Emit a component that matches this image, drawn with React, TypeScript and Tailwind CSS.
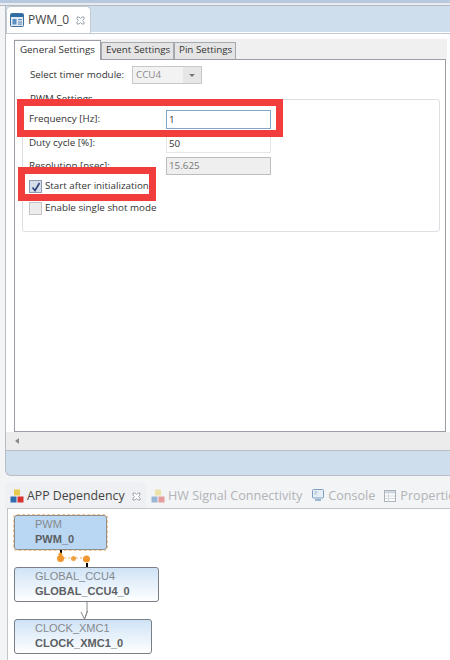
const font = { fontFamily: '"Open Sans", "Noto Sans", sans-serif' };

function CloseIcon({ className }: { className: string }) {
  return (
    <svg width="9" height="9" viewBox="0 0 9 9" className={`shrink-0 ${className}`}>
      <path d="M1 1h2l1.500 1.500L6 1h2v2L6.500 4.500 8 6v2H6L4.500 6.500 3 8H1V6l1.500-1.500L1 3z" fill="#fff" stroke="#8f9aa6" strokeWidth="0.9" />
    </svg>
  );
}

function EditorIcon() {
  return (
    <svg width="14" height="14" viewBox="0 0 14 14" className="shrink-0">
      <rect x="0.500" y="0.500" width="13" height="13" rx="1" fill="#dfeaf5" stroke="#3f6f9f" />
      <rect x="1" y="1" width="12" height="3" fill="#2f6ca6" />
      <rect x="2.500" y="6" width="4" height="5.500" fill="#5b8fc0" />
      <rect x="8" y="6" width="4" height="1.200" fill="#6d90b3" />
      <rect x="8" y="8.500" width="4" height="1.200" fill="#6d90b3" />
      <rect x="8" y="10.500" width="4" height="1.200" fill="#6d90b3" />
    </svg>
  );
}

function DependencyIcon({ faded }: { faded?: boolean }) {
  return (
    <svg width="14" height="14" viewBox="0 0 14 14" className={`shrink-0 ${faded ? 'opacity-45' : ''}`}>
      <rect x="4" y="0.500" width="6" height="6" fill="#e9c84e" />
      <rect x="0.500" y="7.500" width="6" height="6" fill="#2f6cb0" />
      <rect x="7.500" y="7.500" width="6" height="6" fill="#d8322e" />
    </svg>
  );
}

function ConsoleIcon() {
  return (
    <svg width="12" height="13" viewBox="0 0 12 13" className="shrink-0">
      <rect x="0.500" y="0.500" width="11" height="8.500" rx="1" fill="#e7eef6" stroke="#7e9fc4" />
      <path d="M2.500 3h3M2.500 5h2" stroke="#9db4cd" />
      <rect x="3" y="10" width="6" height="2" fill="#9db6d2" />
    </svg>
  );
}

function PropertiesIcon() {
  return (
    <svg width="12" height="12" viewBox="0 0 12 12" className="shrink-0">
      <rect x="0.500" y="0.500" width="11" height="11" fill="#fff" stroke="#aab2bb" />
      <rect x="1" y="1" width="10" height="2.500" fill="#cfd6de" />
      <path d="M1 6h10M1 8.500h10M4.500 3.500v8" stroke="#d2d7dd" />
    </svg>
  );
}

function Checkbox({ checked }: { checked?: boolean }) {
  return (
    <span className={`w-[13px] h-[13px] shrink-0 border flex items-center justify-center ${checked ? 'border-[#8e9bb0] bg-[#d5ddeb]' : 'border-[#c4c4c4] bg-[#ececec]'}`}>
      {checked && (
        <svg width="10" height="10" viewBox="0 0 10 10">
          <path d="M1.500 5.500 4 8.500 8.500 1" fill="none" stroke="#2f3f78" strokeWidth="1.600" />
        </svg>
      )}
    </span>
  );
}

function DiagramNode({ title, name, className }: { title: string; name: string; className: string }) {
  return (
    <div className={`absolute left-[14px] h-[35px] rounded-[3px] border pl-[20px] text-[11px] leading-[15px] pt-[1px] ${className}`} style={{ fontFamily: '"Liberation Sans", sans-serif' }}>
      <div className="text-[#85898e]">{title}</div>
      <div className="font-bold text-[#5c5f63]">{name}</div>
    </div>
  );
}

export default function App() {
  return (
    <div className="relative w-[450px] h-[660px] overflow-hidden flex flex-col bg-[#f3f4f6] text-[9.800px] text-[#333]" style={font}>
      <div className="h-[3px] bg-[#b7c9df]" />
      <div className="h-[3px] bg-[#e9ebee] border-b border-[#b4bac4]" />

      {/* editor view */}
      <div className="h-[470px] flex flex-col rounded-bl-[6px] border-l border-b border-[#b8bec7] ml-[5px] bg-[#cfdeed]">
        <div className="h-[26px] flex shrink-0">
          <div className="w-[85px] h-[27px] bg-white rounded-t-[5px] border border-b-0 border-[#c3c9d1] flex items-center pl-[3px] gap-[4px] text-[12px] text-[#444] z-10">
            <EditorIcon />
            <span>PWM_0</span>
            <CloseIcon className="ml-[3px]" />
          </div>
        </div>
        <div className="h-[2px] bg-white border-b border-[#c3c9d1]" />
        <div className="h-[5px] bg-white shrink-0" />

        <div className="h-[393px] shrink-0 bg-white pl-[8px] flex flex-col">
          {/* inner tabs */}
          <div className="h-[20px] shrink-0 flex items-end bg-[#f0f0f0] mr-[3px]">
            <div className="w-[87px] h-[20px] bg-white border border-b-0 border-[#9a9ea6] pl-[5px] pt-[2px] z-10 -mb-px whitespace-nowrap">General Settings</div>
            <div className="w-[73px] h-[17px] bg-[#e4e4e4] border border-b-0 border-[#a5a9b0] pl-[4px] whitespace-nowrap">Event Settings</div>
            <div className="w-[62px] h-[17px] bg-[#e4e4e4] border border-b-0 border-[#a5a9b0] pl-[4px] whitespace-nowrap">Pin Settings</div>
          </div>

          <div className="flex-1 border border-[#9a9ea6] mr-[4px] pl-[7px] pr-[5px] pt-[6px] bg-white flex flex-col">
            <div className="flex items-center h-[18px] pl-[8px]">
              <span className="w-[102px]">Select timer module:</span>
              <div className="w-[70px] h-[18px] border border-[#c8c8c8] bg-[#f2f2f2] flex items-center pl-[3px] text-[#8a8a8a]">
                <span className="flex-1">CCU4</span>
                <span className="w-[18px] h-full bg-[#e6e6e6] flex items-center justify-center">
                  <span className="w-0 h-0 border-x-[3px] border-x-transparent border-t-[3px] border-t-[#777]" />
                </span>
              </div>
            </div>

            <div className="mt-[9px] pl-[8px] h-[12px] leading-[12px]">PWM Settings</div>

            <div className="h-[133px] -mt-[6px] border border-[#dcdfe3] rounded-[3px] pl-[6px] pt-[10px]">
              <div className="flex items-center h-[19px]">
                <span className="w-[137px]">Frequency [Hz]:</span>
                <div className="w-[105px] h-[19px] border border-[#7fa6c9] px-[2px] leading-[17px]">1</div>
              </div>
              <div className="flex items-center h-[19px] mt-[5px]">
                <span className="w-[137px]">Duty cycle [%]:</span>
                <div className="w-[105px] h-[19px] border border-[#e3e6ea] px-[2px] leading-[17px]">50</div>
              </div>
              <div className="flex items-center h-[18px] mt-[4px]">
                <span className="w-[137px]">Resolution [nsec]:</span>
                <div className="w-[105px] h-[18px] border border-[#bdbdbd] bg-[#efefef] px-[2px] leading-[16px] text-[#777]">15.625</div>
              </div>
              <div className="flex items-center h-[13px] mt-[5px] gap-[3px]">
                <Checkbox checked />
                <span>Start after initialization</span>
              </div>
              <div className="flex items-center h-[13px] mt-[9px] gap-[3px]">
                <Checkbox />
                <span>Enable single shot mode</span>
              </div>
            </div>

            <div className="flex-1" />
          </div>
        </div>

        <div className="h-[19px] shrink-0 bg-[#ececec] border-b border-[#b9bcc0] pl-[9px] flex items-center">
          <span className="w-0 h-0 border-y-[3px] border-y-transparent border-r-[4px] border-r-[#8a8a8a]" />
        </div>
        <div className="flex-1" />
      </div>

      {/* bottom view */}
      <div className="h-[6px] shrink-0" />
      <div className="h-[26px] shrink-0 flex items-center pt-[2px] text-[12.600px] text-[#b0b3b7] whitespace-nowrap">
        <div className="w-[141px] h-[26px] -mt-[2px] ml-[5px] shrink-0 rounded-t-[6px] bg-[#eef0f3] flex items-center pt-[2px] pl-[5px] gap-[3px] text-[12.300px] text-[#444]">
          <DependencyIcon />
          <span>APP Dependency</span>
          <CloseIcon className="ml-[4px]" />
        </div>
        <div className="flex items-center gap-[3px] ml-[5px] shrink-0">
          <DependencyIcon faded />
          <span>HW Signal Connectivity</span>
        </div>
        <div className="flex items-center gap-[4px] ml-[10px] shrink-0">
          <ConsoleIcon />
          <span>Console</span>
        </div>
        <div className="flex items-center gap-[4px] ml-[9px] shrink-0">
          <PropertiesIcon />
          <span>Properties</span>
        </div>
      </div>

      <div className="flex-1 ml-[7px] bg-white border-t border-l border-[#c2c5c9]" />

      {/* diagram */}
      <div className="absolute left-0 top-0 w-[450px] h-[660px] pointer-events-none">
        <DiagramNode title="PWM" name="PWM_0" className="top-[515px] w-[93px] border-[#8d8f8f] bg-[#b9d7f3] outline-1 outline-dashed outline-[#f0c48f]" />
        <DiagramNode title="GLOBAL_CCU4" name="GLOBAL_CCU4_0" className="top-[567px] w-[145px] border-[#7a7f87] bg-gradient-to-b from-[#cfe3f6] to-white" />
        <DiagramNode title="CLOCK_XMC1" name="CLOCK_XMC1_0" className="top-[619px] w-[138px] border-[#7a7f87] bg-gradient-to-b from-[#cfe3f6] to-white" />
        <svg width="110" height="72" viewBox="0 0 110 72" className="absolute left-0 top-[549px]">
          <path d="M61 1v4M87 14v4" stroke="#000" strokeWidth="2" />
          <path d="M60 9h27" stroke="#f2a65a" strokeWidth="1" strokeDasharray="2 2" />
          <circle cx="60.500" cy="9.500" r="3.500" fill="#f0962e" />
          <circle cx="60.500" cy="5.500" r="2" fill="#f0962e" />
          <circle cx="73.500" cy="9.500" r="2.500" fill="#f0a040" />
          <circle cx="86.500" cy="10" r="3.500" fill="#f0962e" />
          <path d="M87 53v10l-2 6" fill="none" stroke="#85888c" />
          <path d="M81 63l3.500 7 3-8" fill="none" stroke="#85888c" />
        </svg>
      </div>

      {/* callouts */}
      <div className="absolute left-[17px] top-[99px] w-[266px] h-[38px] border-[7px] border-[#f23d3d]" />
      <div className="absolute left-[18px] top-[167px] w-[138px] h-[34px] border-[7px] border-[#f23d3d]" />
    </div>
  );
}
